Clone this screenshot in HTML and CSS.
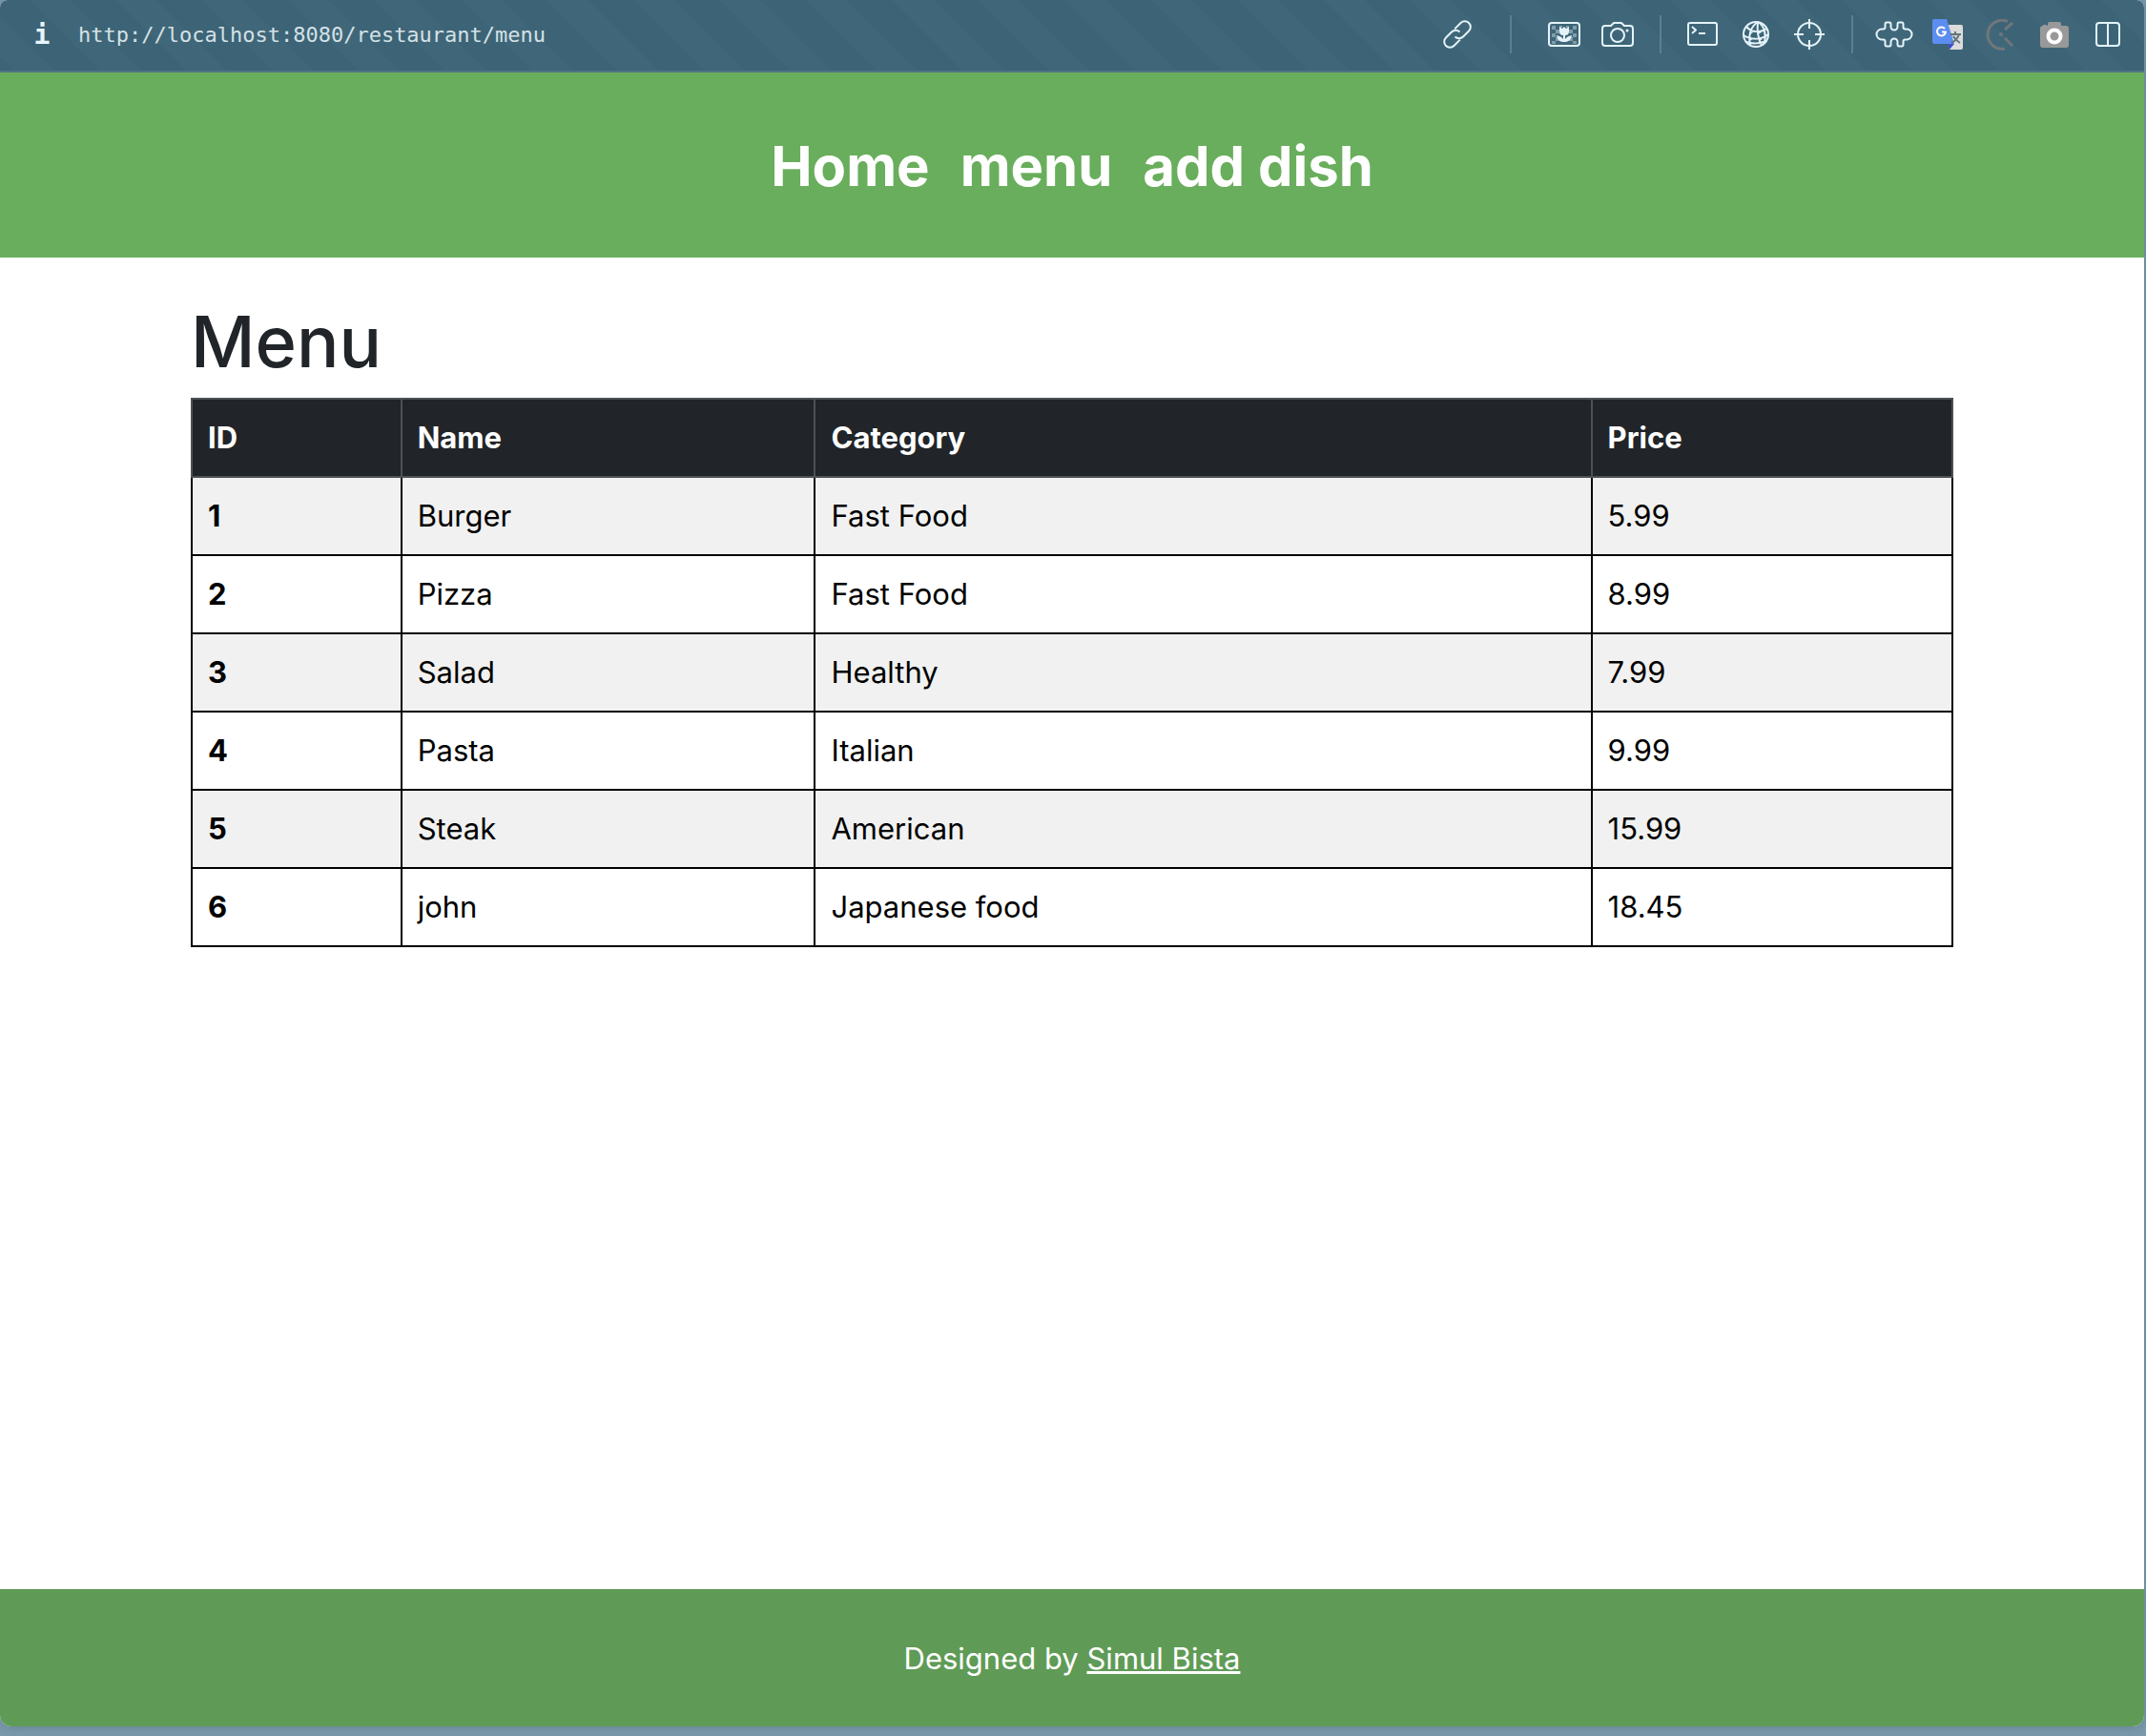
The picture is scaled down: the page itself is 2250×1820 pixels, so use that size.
FILE: index.html
```html
<!DOCTYPE html>
<html lang="en">
<head>
<meta charset="utf-8">
<title>Menu</title>
<link rel="stylesheet" href="styles.css">
</head>
<body>
<div class="window">
  <div class="toolbar">
    <button class="info" aria-label="Site information">i</button>
    <a class="url" href="#">http://localhost:8080/restaurant/menu</a>
    <div class="tools tools-link">
      <button class="tool" aria-label="Copy link"><svg viewBox="0 0 36 36"><g transform="rotate(-45 18 18)"><path d="M16 24H7a6 6 0 0 1 0-12H15.500a6 6 0 0 1 6 6"/><path d="M20 12h9a6 6 0 0 1 0 12H20.500a6 6 0 0 1-6-6"/></g></svg></button>
    </div>
    <div class="tools">
      <button class="tool" aria-label="Page image"><svg viewBox="0 0 36 36"><rect x="2" y="6" width="32" height="24" rx="3"/><g class="checks"><path d="M5 9h4v4H5zM9 13h4v4H9zM5 17h4v4H5zM9 21h4v4H9zM5 25h4v3H5zM13 9h3v2h-3zM20 9h3v2h-3zM27 9h4v4h-4zM23 13h4v4h-4zM27 17h4v4h-4zM23 21h4v4h-4zM27 25h4v3h-4z"/></g><path class="solid" d="M13 10l3 2 2-2 2 2 3-2v5q0 4-4 4v4q2-3 7-4-1 7-7 7h-2q-6 0-7-7 5 1 7 4v-4q-4 0-4-4z"/></svg></button>
      <button class="tool" aria-label="Capture"><svg viewBox="0 0 36 36"><path d="M5 9h6l3-3h8l3 3h6a3 3 0 0 1 3 3v15a3 3 0 0 1-3 3H5a3 3 0 0 1-3-3V12a3 3 0 0 1 3-3z"/><circle cx="18" cy="19" r="7"/><circle class="solid" cx="28" cy="14" r="1.500"/></svg></button>
    </div>
    <div class="tools">
      <button class="tool" aria-label="Terminal"><svg viewBox="0 0 36 36"><rect x="3" y="6" width="30" height="23" rx="2"/><path d="M7 10l4 3.500-4 3.500M14 17h7"/></svg></button>
      <button class="tool" aria-label="Network"><svg viewBox="0 0 36 36"><circle cx="18" cy="18" r="13"/><path d="M20 5C12 10 10 20 12 29.500M20 5c-1 9 0 17 4 24.500M20 5c7 4 9 13 7 22M8 10c5 6 15 7 21 2M5 19c8 5 19 5 26-1M8 26c6 2 15 2 21-1"/><path class="solid" d="M20 14l4 2-4 2zM11 15l4 1-4 3zM22 21l3 2-4 2zM11 21l4 2-4 2z"/></svg></button>
      <button class="tool" aria-label="Locate element"><svg viewBox="0 0 36 36"><circle cx="18" cy="18" r="12"/><path d="M18 2v10M18 24v10M2 18h10M24 18h10"/></svg></button>
    </div>
    <div class="tools">
      <button class="tool" aria-label="Extensions"><svg class="wide" viewBox="0 0 40 36"><path d="M12 5.500h3q1.500 0 1.500 2v2.500a3.500 3.500 0 0 0 7 0V7.500q0-2 1.500-2h3q1.500 0 1.500 2v3q0 2 2 2h1.500a5.500 5.500 0 0 1 0 11H31.500q-2 0-2 2v3q0 2-1.500 2h-3q-1.500 0-1.500-2V26a3.500 3.500 0 0 0-7 0v2.500q0 2-1.500 2h-3q-1.500 0-1.500-2v-3q0-2-2-2H7a5.500 5.500 0 0 1 0-11h1.500q2 0 2-2v-3q0-2 1.500-2z"/></svg></button>
      <button class="tool" aria-label="Translate"><svg class="color" viewBox="0 0 36 36"><path fill="#dcdcdc" d="M16 8h16q2 0 2 2v22q0 2-2 2H20z"/><path fill="#3f51c4" d="M18 28h7l-5 6z"/><path fill="#5c8df0" d="M4 2h13l8 26H4q-2 0-2-2V4q0-2 2-2z"/><path fill="none" stroke="#fff" stroke-width="2" d="M15 12a4.500 4.500 0 1 0 1 3.500h-4"/><path fill="none" stroke="#62757d" stroke-width="2" d="M21 18h11M26 15v3M30 18q-2 6-8 9M24 20q2 4 7 7"/></svg></button>
      <button class="tool" aria-label="Clip"><svg class="dim" viewBox="0 0 36 36"><path d="M25 4.500A15 15 0 1 0 22 33M30 6l-8 7M22 22l8 8"/><circle class="dimdot" cx="18" cy="18" r="2"/></svg></button>
      <button class="tool" aria-label="Screenshot"><svg class="color" viewBox="0 0 36 36"><path fill="#999" d="M13 5h10q2 0 2 2v2h5q3 0 3 3v17q0 3-3 3H6q-3 0-3-3V12q0-3 3-3V8h4v1h1V7q0-2 2-2z"/><circle cx="18" cy="20" r="6.500" fill="#999" stroke="#fff" stroke-width="4"/></svg></button>
      <button class="tool" aria-label="Split view"><svg viewBox="0 0 36 36"><rect x="6" y="6" width="24" height="24" rx="3"/><path d="M18 6v24"/></svg></button>
    </div>
  </div>
  <header class="header">
    <nav class="nav">
      <a href="#">Home</a>
      <a href="#">menu</a>
      <a href="#">add dish</a>
    </nav>
  </header>
  <main class="content">
    <h1>Menu</h1>
    <table class="menu">
      <colgroup><col class="c-id"><col class="c-name"><col class="c-category"><col class="c-price"></colgroup>
      <thead><tr><th scope="col">ID</th><th scope="col">Name</th><th scope="col">Category</th><th scope="col">Price</th></tr></thead>
      <tbody>
        <tr><th scope="row">1</th><td>Burger</td><td>Fast Food</td><td>5.99</td></tr>
        <tr><th scope="row">2</th><td>Pizza</td><td>Fast Food</td><td>8.99</td></tr>
        <tr><th scope="row">3</th><td>Salad</td><td>Healthy</td><td>7.99</td></tr>
        <tr><th scope="row">4</th><td>Pasta</td><td>Italian</td><td>9.99</td></tr>
        <tr><th scope="row">5</th><td>Steak</td><td>American</td><td>15.99</td></tr>
        <tr><th scope="row">6</th><td>john</td><td>Japanese food</td><td>18.45</td></tr>
      </tbody>
    </table>
  </main>
  <footer class="footer"><p>Designed by <a href="#">Simul Bista</a></p></footer>
</div>
</body>
</html>
```
FILE: styles.css
```css
* { box-sizing: border-box; }

body {
  margin: 0;
  padding: 0 2px 10px 0;
  background: #7b9bad;
  font-family: Inter, "Liberation Sans", sans-serif;
  font-size: 31px;
  line-height: 48px;
  color: #000;
}

.window {
  display: flex;
  flex-direction: column;
  min-height: calc(100vh - 10px);
  overflow: hidden;
  border-radius: 8px 8px 12px 12px;
  background: #fff;
  box-shadow: 0 0 12px rgba(40, 60, 70, 0.3);
}

.toolbar {
  display: flex;
  align-items: center;
  height: 76px;
  padding: 0 10px 2px 28px;
  border-bottom: 2px solid #507388;
  background: repeating-linear-gradient(45deg, #3c6476 0 10px, #406779 10px 40px, #3c6476 40px 64px);
}

.info {
  width: 32px;
  padding: 2px 0 0;
  border: 0;
  background: none;
  color: #e9f6fb;
  font: bold 28px/40px "DejaVu Sans Mono", monospace;
}

.url {
  flex: 1;
  margin-left: 22px;
  padding-top: 2px;
  color: #d5e1e6;
  font: 22px/40px "DejaVu Sans Mono", monospace;
  text-decoration: none;
}

.tools { display: flex; align-items: center; }

.tools + .tools::before {
  content: "";
  width: 2px;
  height: 40px;
  margin: 0 15px 0 16px;
  background: #5a8094;
}

.tools-link + .tools::before { margin: 0 27px; }

.tool {
  display: flex;
  justify-content: center;
  width: 56px;
  padding: 0;
  border: 0;
  background: none;
}

.tool svg {
  width: 36px;
  height: 36px;
  fill: none;
  stroke: #e4f3f9;
  stroke-width: 2;
  stroke-linejoin: round;
}

.tool svg.wide { width: 40px; }
.tool svg.color { stroke: none; }
.tool svg.dim { stroke: #6f767b; stroke-width: 3; }
.tool .solid { fill: #e4f3f9; stroke: none; }
.tool .checks { fill: #7f9dab; stroke: none; }
.tool .dimdot { fill: #6f767b; stroke: none; }

.header {
  padding: 62px 0 60px;
  background: #69ae5c;
}

.nav {
  display: flex;
  justify-content: center;
  gap: 32px;
  font-size: 58px;
  font-weight: 700;
  line-height: 72px;
}

.nav a { color: #fff; text-decoration: none; }

.content {
  flex: 1;
  width: 100%;
  max-width: 1848px;
  margin: 0 auto;
  padding-top: 40px;
}

h1 {
  margin: 0 0 11px;
  color: #212529;
  font-size: 74px;
  font-weight: 500;
  line-height: 96px;
}

.menu {
  width: 100%;
  table-layout: fixed;
  border-collapse: collapse;
}

.c-id { width: 11.9%; }
.c-name { width: 23.5%; }
.c-category { width: 44.1%; }
.c-price { width: 20.5%; }

.menu th, .menu td {
  padding: 16px;
  border: 2px solid #000;
  text-align: left;
}

.menu th { font-weight: 700; }
.menu thead th { border-color: #4d5154; background: #212529; color: #fff; }
.menu tbody tr:nth-child(odd) { background: #f1f1f1; }

.footer {
  padding: 49px 0 47px;
  background: #5f9b56;
  color: #fff;
  text-align: center;
}

.footer p { margin: 0; }
.footer a { color: #fff; }
```
